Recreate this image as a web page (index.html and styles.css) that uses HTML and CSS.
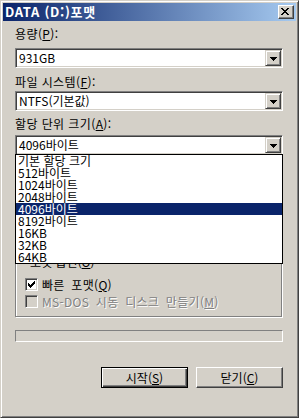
FILE: index.html
```html
<!DOCTYPE html>
<html lang="ko">
<head>
    <meta charset="UTF-8">
    <meta name="viewport" content="width=device-width, initial-scale=1.0">
    <title>DATA (D:)포맷</title>
    <link rel="stylesheet" href="styles.css">
</head>
<body>
    <div class="window">
        <div class="titlebar">
            <span class="title">DATA (D:)포맷</span>
            <button class="close" type="button">
                <svg width="8" height="7" viewBox="0 0 8 7" shape-rendering="crispEdges">
                    <path d="M0 0h2v1H0z M6 0h2v1H6z M1 1h2v1H1z M5 1h2v1H5z M2 2h4v1H2z M3 3h2v1H3z M2 4h4v1H2z M1 5h2v1H1z M5 5h2v1H5z M0 6h2v1H0z M6 6h2v1H6z" fill="#000"/>
                </svg>
            </button>
        </div>

        <div class="content">
            <div class="label label-first">용량(<u>P</u>):</div>
            <div class="combo combo-first">
                <span class="value">931GB</span>
                <span class="drop"><svg width="7" height="4" viewBox="0 0 7 4" shape-rendering="crispEdges"><path d="M0 0h7v1H0z M1 1h5v1H1z M2 2h3v1H2z M3 3h1v1H3z" fill="#000"/></svg></span>
            </div>

            <div class="label label-second">파일 시스템(<u>F</u>):</div>
            <div class="combo combo-second">
                <span class="value">NTFS(기본값)</span>
                <span class="drop"><svg width="7" height="4" viewBox="0 0 7 4" shape-rendering="crispEdges"><path d="M0 0h7v1H0z M1 1h5v1H1z M2 2h3v1H2z M3 3h1v1H3z" fill="#000"/></svg></span>
            </div>

            <div class="label label-third">할당 단위 크기(<u>A</u>):</div>
            <div class="combo combo-third">
                <span class="value">4096바이트</span>
                <span class="drop"><svg width="7" height="4" viewBox="0 0 7 4" shape-rendering="crispEdges"><path d="M0 0h7v1H0z M1 1h5v1H1z M2 2h3v1H2z M3 3h1v1H3z" fill="#000"/></svg></span>
                <ul class="listbox">
                    <li>기본 할당 크기</li>
                    <li>512바이트</li>
                    <li>1024바이트</li>
                    <li>2048바이트</li>
                    <li class="selected">4096바이트</li>
                    <li>8192바이트</li>
                    <li>16KB</li>
                    <li>32KB</li>
                    <li>64KB</li>
                </ul>
            </div>

            <fieldset class="group">
                <legend>포맷 옵션(<u>O</u>)</legend>
                <div class="check-row">
                    <span class="checkbox checked">
                        <svg width="7" height="7" viewBox="0 0 7 7" shape-rendering="crispEdges"><path d="M6 0h1v1H6z M5 1h2v1H5z M0 2h1v1H0z M4 2h3v1H4z M0 3h2v1H0z M3 3h3v1H3z M0 4h5v1H0z M1 5h3v1H1z M2 6h1v1H2z" fill="#000"/></svg>
                    </span>
                    <span class="check-label">빠른 포맷(<u>Q</u>)</span>
                </div>
                <div class="check-row disabled">
                    <span class="checkbox"></span>
                    <span class="check-label">MS-DOS 시동 디스크 만들기(<u>M</u>)</span>
                </div>
            </fieldset>

            <div class="progress"></div>

            <div class="buttons">
                <button class="btn btn-default" type="button">시작(<u>S</u>)</button>
                <button class="btn" type="button">닫기(<u>C</u>)</button>
            </div>
        </div>
    </div>
</body>
</html>
```

FILE: styles.css
```css
* {
    box-sizing: border-box;
}
html, body {
    margin: 0;
    padding: 0;
}
body {
    font-family: "Noto Sans CJK KR", sans-serif;
    font-size: 12px;
    color: #000;
    background-color: #d4d0c8;
}
.window {
    width: 299px;
    height: 418px;
    padding: 2px;
    background-color: #d4d0c8;
    border: 1px solid;
    border-color: #d4d0c8 #404040 #404040 #d4d0c8;
    box-shadow: inset 1px 1px #fff, inset -1px -1px #808080;
    display: flex;
    flex-direction: column;
}
.titlebar {
    height: 18px;
    padding: 0 2px 0 2px;
    display: flex;
    align-items: center;
    justify-content: space-between;
    background: linear-gradient(to right, #0a246a, #a6caf0);
}
.title {
    color: #fff;
    font-weight: bold;
    font-size: 13px;
    line-height: 18px;
    letter-spacing: 0.7px;
    white-space: nowrap;
}
.close {
    width: 16px;
    height: 14px;
    padding: 0;
    margin: 0;
    background-color: #d4d0c8;
    border: 1px solid;
    border-color: #fff #404040 #404040 #fff;
    box-shadow: inset -1px -1px #808080;
    display: flex;
    align-items: flex-start;
    justify-content: flex-start;
}
.close svg {
    display: block;
    margin: 2px 0 0 2px;
}
.content {
    padding: 0 13px 0 12px;
    display: flex;
    flex-direction: column;
}
.label {
    line-height: 14px;
    height: 14px;
    letter-spacing: 0.4px;
    white-space: nowrap;
}
.label-first {
    margin-top: 6px;
}
.label-second {
    margin-top: 7px;
}
.label-third {
    margin-top: 6px;
}
.combo {
    position: relative;
    height: 20px;
    padding: 1px 1px 1px 3px;
    background-color: #fff;
    border: 1px solid;
    border-color: #808080 #fff #fff #808080;
    box-shadow: inset 1px 1px #404040, inset -1px -1px #d4d0c8;
    display: flex;
    align-items: center;
    justify-content: space-between;
}
.combo-first {
    margin-top: 7px;
}
.combo-second {
    margin-top: 2px;
}
.combo-third {
    margin-top: 4px;
}
.value {
    line-height: 16px;
    white-space: nowrap;
}
.drop {
    width: 16px;
    height: 16px;
    background-color: #d4d0c8;
    border: 1px solid;
    border-color: #d4d0c8 #404040 #404040 #d4d0c8;
    box-shadow: inset 1px 1px #fff, inset -1px -1px #808080;
    display: flex;
    align-items: center;
    justify-content: center;
}
.drop svg {
    display: block;
    margin: 1px 0 0 0;
}
.listbox {
    position: absolute;
    top: 100%;
    left: -1px;
    width: 268px;
    margin: 0;
    padding: 0;
    list-style: none;
    background-color: #fff;
    border: 1px solid #000;
    z-index: 2;
}
.listbox li {
    height: 12px;
    line-height: 12px;
    padding-left: 2px;
    white-space: nowrap;
}
.listbox li.selected {
    background-color: #0a246a;
    color: #fff;
}
.group {
    margin: 100px 1px 0 0;
    padding: 9px 0 8px 9px;
    min-width: 0;
    border: 1px solid #808080;
    box-shadow: inset 1px 1px #fff, 1px 1px #fff;
    display: flex;
    flex-direction: column;
    gap: 4px;
}
.group legend {
    padding: 0 1px;
    margin-left: 4px;
    line-height: 14px;
    background-color: #d4d0c8;
}
.check-row {
    height: 13px;
    display: flex;
    align-items: center;
    gap: 4px;
}
.checkbox {
    width: 13px;
    height: 13px;
    flex: none;
    background-color: #fff;
    border: 1px solid;
    border-color: #808080 #fff #fff #808080;
    box-shadow: inset 1px 1px #404040, inset -1px -1px #d4d0c8;
    display: flex;
    align-items: flex-start;
    justify-content: flex-start;
}
.checkbox svg {
    display: block;
    margin: 2px 0 0 2px;
}
.check-label {
    line-height: 14px;
    word-spacing: 3px;
    letter-spacing: 0.3px;
    white-space: nowrap;
}
.disabled .checkbox {
    background-color: #d4d0c8;
}
.disabled .check-label {
    color: #808080;
    text-shadow: 1px 1px #fff;
}
.progress {
    margin-top: 13px;
    height: 12px;
    border: 1px solid;
    border-color: #808080 #fff #fff #808080;
}
.buttons {
    margin-top: 25px;
    display: flex;
    justify-content: flex-end;
    gap: 8px;
}
.btn {
    width: 87px;
    height: 21px;
    padding: 0;
    margin: 0;
    font-family: "Noto Sans CJK KR", sans-serif;
    font-size: 12px;
    line-height: 17px;
    color: #000;
    background-color: #d4d0c8;
    border: 1px solid;
    border-color: #fff #404040 #404040 #fff;
    box-shadow: inset -1px -1px #808080;
}
.btn-default {
    border-color: #000;
    box-shadow: inset 1px 1px #fff, inset -1px -1px #404040, inset -2px -2px #808080;
}
```
